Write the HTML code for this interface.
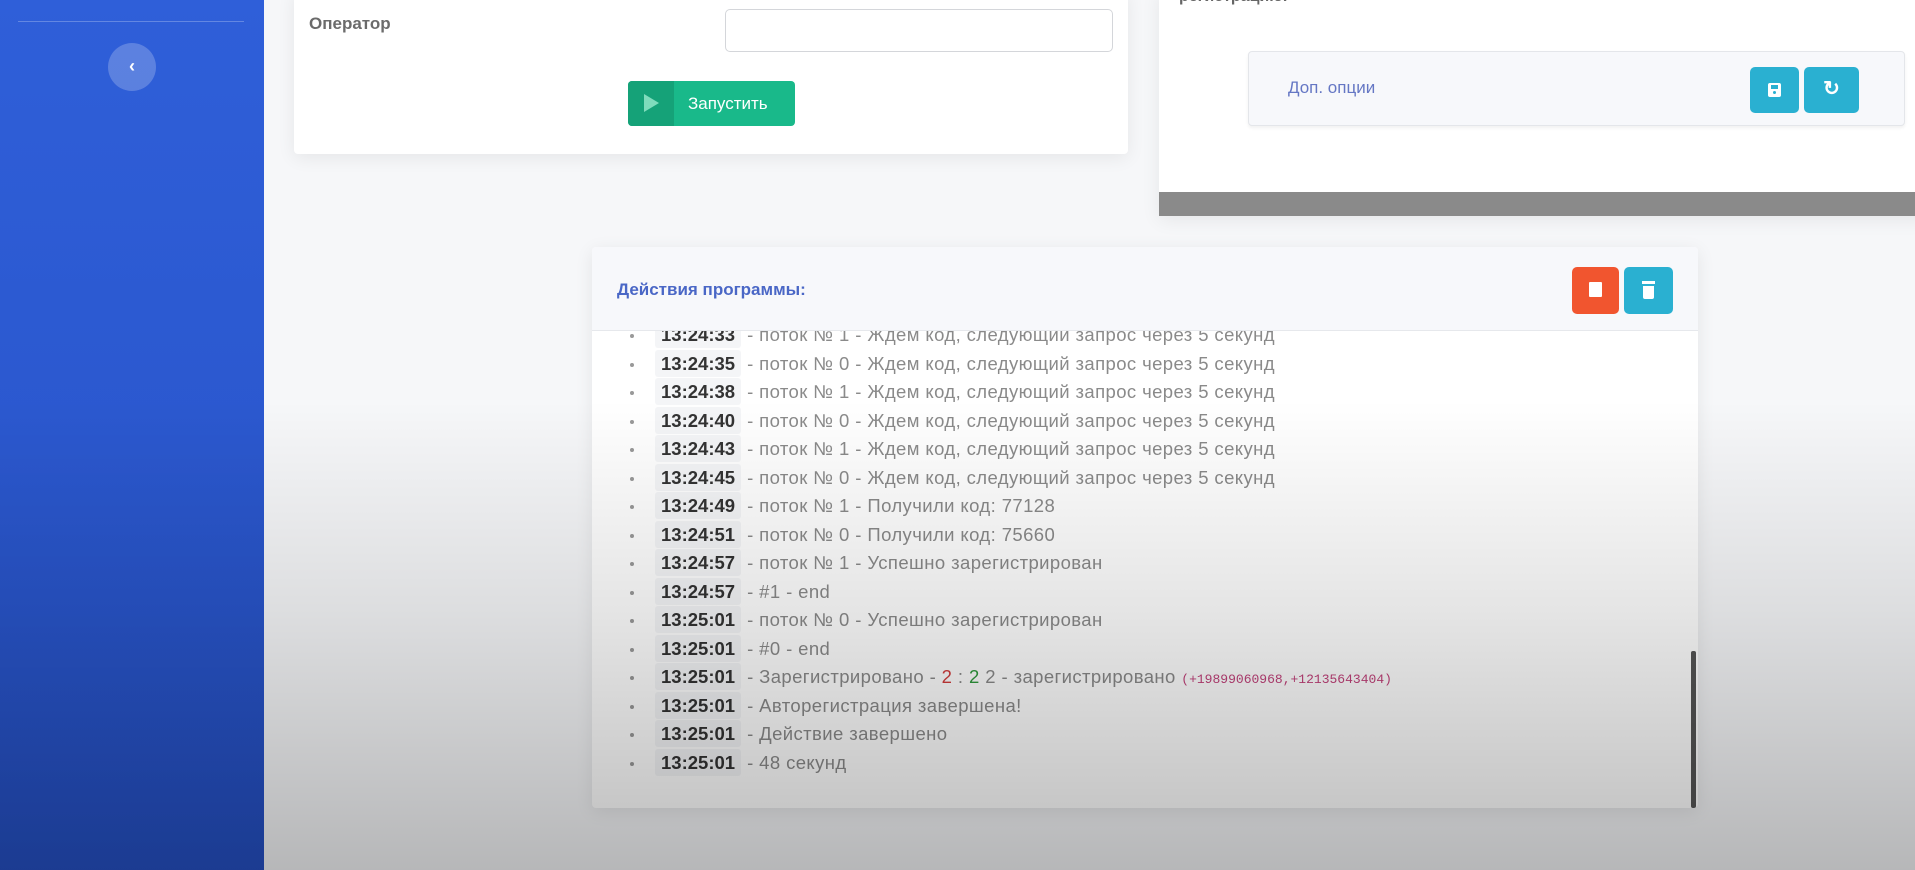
<!DOCTYPE html>
<html><head><meta charset="utf-8"><style>
*{box-sizing:border-box;margin:0;padding:0}
body{width:1915px;height:870px;overflow:hidden;background:#f6f7f9;font-family:"Liberation Sans",sans-serif;position:relative}
.side{position:absolute;left:0;top:0;width:264px;height:870px;background:linear-gradient(#2f5fd9,#2b58cf 50%,#2550c4)}
.side .ln{position:absolute;left:18px;top:21px;width:226px;height:1px;background:rgba(255,255,255,.25)}
.side .bk{position:absolute;left:108px;top:43px;width:48px;height:48px;border-radius:50%;background:rgba(255,255,255,.22);color:#fff;font-size:18px;text-align:center;line-height:46px;font-weight:bold}
.card{position:absolute;background:#fff;box-shadow:0 4px 18px rgba(0,0,0,.07);border-radius:4px}
.lab{position:absolute;left:15px;top:14px;font-size:17px;font-weight:bold;color:#6b6b6b}
.inp{position:absolute;left:431px;top:9px;width:388px;height:43px;border:1px solid #d4d6da;border-radius:5px}
.run{position:absolute;left:334px;top:81px;width:167px;height:45px;background:#19b98a;border-radius:4px;color:#fff;font-size:17px;overflow:hidden}
.run .l{position:absolute;left:0;top:0;width:46px;height:45px;background:#15a278}
.run .tri{position:absolute;left:16px;top:13px;width:0;height:0;border-left:15px solid #7fdcbc;border-top:9px solid transparent;border-bottom:9px solid transparent}
.run span{position:absolute;left:60px;top:13px}
.btn{position:absolute;border-radius:5px;background:#2ab0d1}
.log{position:absolute;left:592px;top:247px;width:1106px;height:561px;background:#fff;border-radius:4px;box-shadow:0 4px 18px rgba(0,0,0,.08);overflow:hidden}
.hd{height:84px;background:#f7f8fb;border-bottom:1px solid #e6e8ec;position:relative;z-index:2}
.hd .t{position:absolute;left:25px;top:33px;font-size:17px;font-weight:bold;color:#4a67c6}
ul{position:absolute;left:0;top:74px;list-style:none}
li{height:28.5px;line-height:28.5px;font-size:18.5px;letter-spacing:.4px;color:#8a8a8a;white-space:nowrap;position:relative;padding-left:63px}
li:before{content:"";position:absolute;left:38px;top:13px;width:4px;height:4px;border-radius:50%;background:#999}
li b{color:#333;background:#f4f5f7;padding:3px 6px;border-radius:3px;margin-right:6px;font-weight:bold;letter-spacing:0}
.r{color:#d23b3b}.g{color:#2f9a3c}.m{color:#c2417a;font-family:"Liberation Mono",monospace;font-size:13px;letter-spacing:0}
.ov{position:absolute;left:0;top:0;width:1915px;height:870px;background:linear-gradient(rgba(0,0,0,0) 0,rgba(0,0,0,0) 46%,rgba(0,0,0,.1) 70%,rgba(0,0,0,.26) 100%);pointer-events:none}
</style></head><body>
<div class="side"><div class="ln"></div><div class="bk">‹</div></div>
<div class="card" style="left:294px;top:-10px;width:834px;height:164px">
 <div style="position:relative;top:10px">
 <div class="lab">Оператор</div><div class="inp"></div>
 <div class="run" style="left:334px;top:81px"><div class="l"></div><div class="tri"></div><span>Запустить</span></div>
 </div>
</div>
<div class="card" style="left:1159px;top:-10px;width:770px;height:226px;border-radius:0">
 <div style="position:absolute;left:20px;top:-2px;font-size:16px;font-weight:bold;color:#666">регистрацию.</div>
 <div style="position:absolute;left:89px;top:61px;width:657px;height:75px;background:#f7f8fb;border:1px solid #e4e6ea;border-radius:4px;box-shadow:0 2px 3px rgba(0,0,0,.06)">
  <div style="position:absolute;left:39px;top:26px;font-size:17px;color:#6577c4">Доп. опции</div>
  <div class="btn" style="left:501px;top:15px;width:49px;height:46px"><div style="position:absolute;left:18px;top:16px;width:13px;height:14px;background:#fff;border-radius:2px"><div style="position:absolute;left:3px;top:2px;width:7px;height:4px;background:#2ab0d1"></div><div style="position:absolute;left:5px;top:8px;width:3px;height:3px;background:#2ab0d1;border-radius:50%"></div></div></div>
  <div class="btn" style="left:555px;top:15px;width:55px;height:46px;color:#fff;font-size:20px;font-weight:bold;text-align:center;line-height:44px">↻</div>
 </div>
 <div style="position:absolute;left:0;top:202px;width:770px;height:24px;background:#8a8a8a"></div>
</div>
<div class="log">
 <div class="hd"><div class="t">Действия программы:</div>
  <div class="btn" style="left:980px;top:20px;width:47px;height:47px;background:#f1552f"><div style="position:absolute;left:17px;top:15px;width:13px;height:15px;background:#fff;border-radius:1px"></div></div>
  <div class="btn" style="left:1032px;top:20px;width:49px;height:47px"><div style="position:absolute;left:18px;top:14px;width:13px;height:3px;background:#fff"></div><div style="position:absolute;left:19px;top:19px;width:11px;height:13px;background:#fff;border-radius:0 0 2px 2px"></div></div>
 </div>
 <ul>
 <li><b>13:24:33</b>- поток № 1 - Ждем код, следующий запрос через 5 секунд</li>
 <li><b>13:24:35</b>- поток № 0 - Ждем код, следующий запрос через 5 секунд</li>
 <li><b>13:24:38</b>- поток № 1 - Ждем код, следующий запрос через 5 секунд</li>
 <li><b>13:24:40</b>- поток № 0 - Ждем код, следующий запрос через 5 секунд</li>
 <li><b>13:24:43</b>- поток № 1 - Ждем код, следующий запрос через 5 секунд</li>
 <li><b>13:24:45</b>- поток № 0 - Ждем код, следующий запрос через 5 секунд</li>
 <li><b>13:24:49</b>- поток № 1 - Получили код: 77128</li>
 <li><b>13:24:51</b>- поток № 0 - Получили код: 75660</li>
 <li><b>13:24:57</b>- поток № 1 - Успешно зарегистрирован</li>
 <li><b>13:24:57</b>- #1 - end</li>
 <li><b>13:25:01</b>- поток № 0 - Успешно зарегистрирован</li>
 <li><b>13:25:01</b>- #0 - end</li>
 <li><b>13:25:01</b>- Зарегистрировано - <span class="r">2</span> : <span class="g">2</span> 2 - зарегистрировано <span class="m">(+19899060968,+12135643404)</span></li>
 <li><b>13:25:01</b>- Авторегистрация завершена!</li>
 <li><b>13:25:01</b>- Действие завершено</li>
 <li><b>13:25:01</b>- 48 секунд</li>
 </ul>
 <div style="position:absolute;left:1099px;top:404px;width:5px;height:157px;background:#555;border-radius:2px"></div>
</div>
<div class="ov"></div>
</body></html>
